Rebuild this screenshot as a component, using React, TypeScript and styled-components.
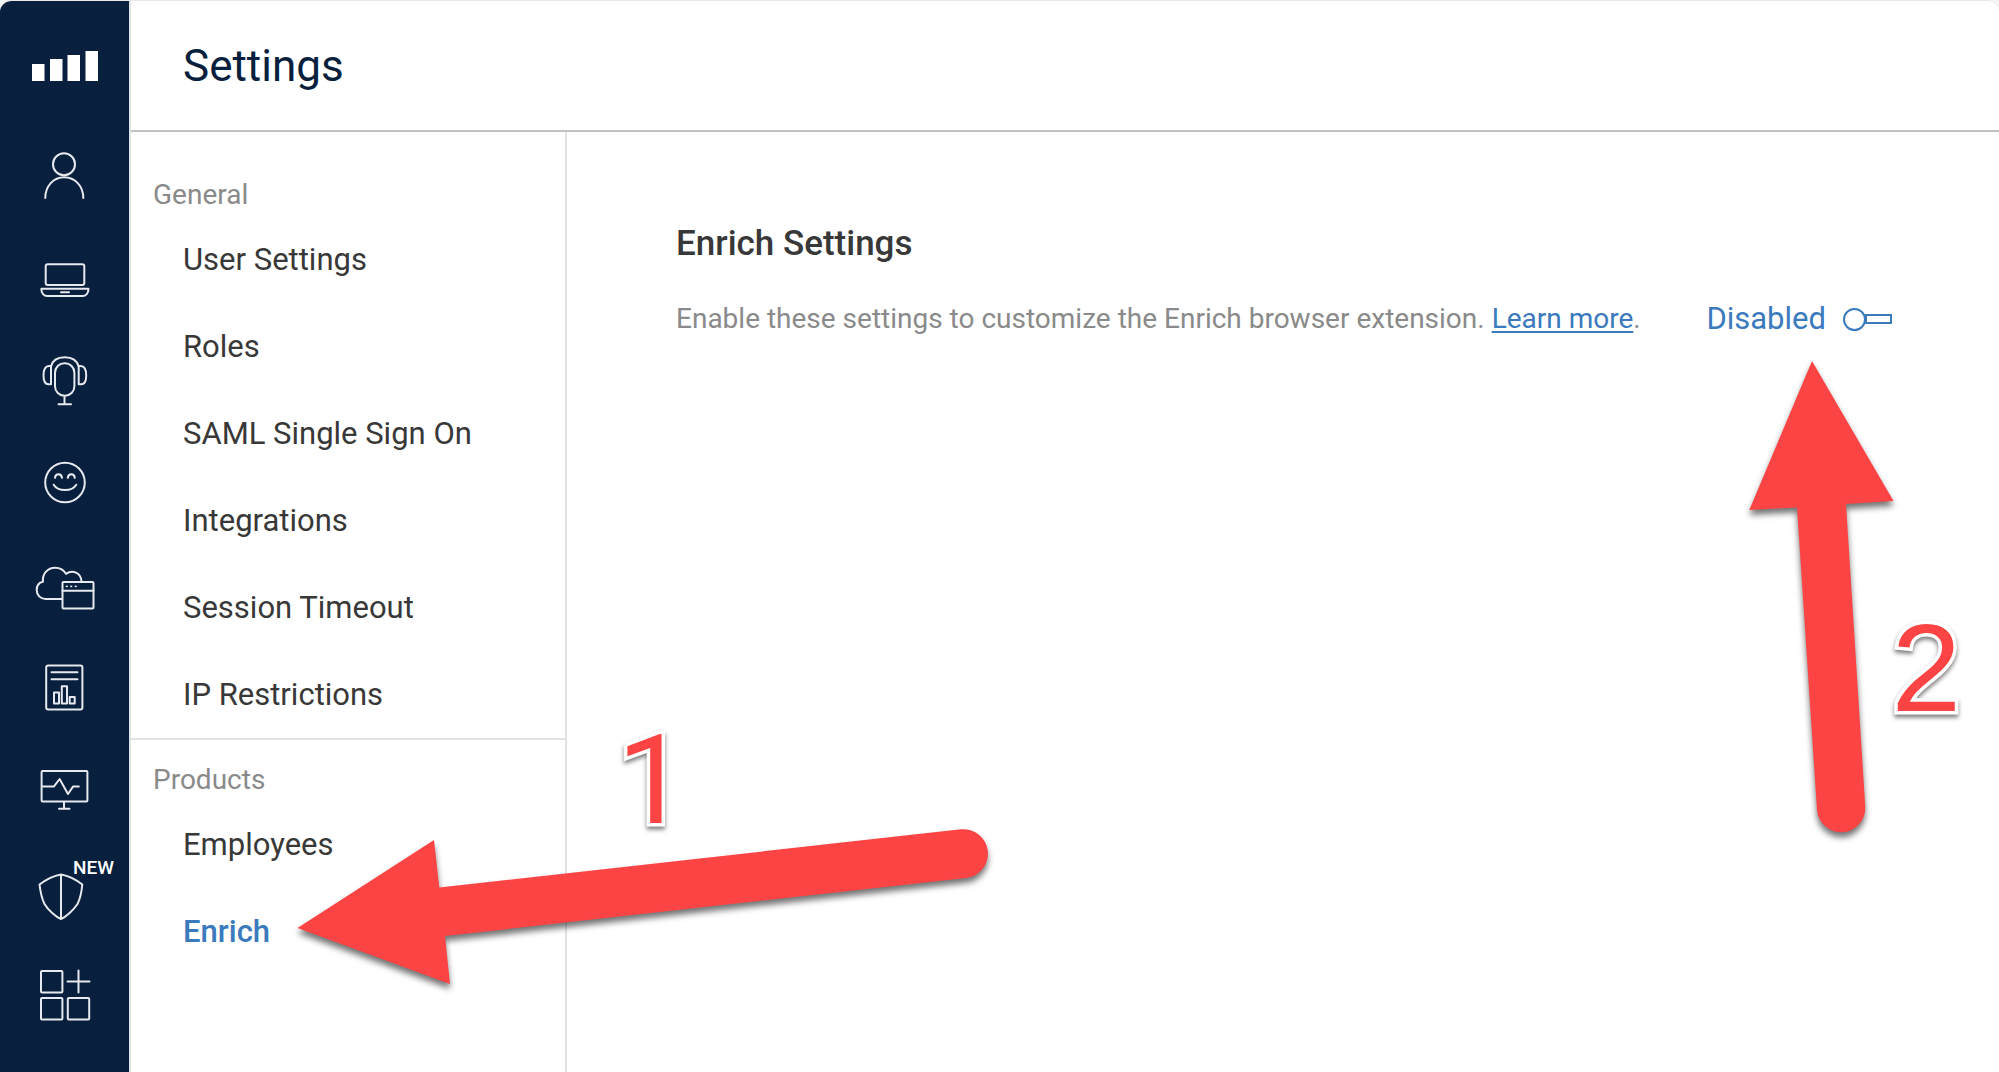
import React from "react";
import styled, { createGlobalStyle } from "styled-components";

const color = {
  navy: "#081f3d",
  ink: "#383838",
  muted: "#8a8a8a",
  link: "#3a7abd",
  line: "#e2e2e2",
  headerLine: "#c2c2c2",
  marker: "#fd4444",
};

const GlobalStyle = createGlobalStyle`
  *, *::before, *::after { box-sizing: border-box; }
  body {
    margin: 0;
    background: #f4f4f4;
    color: ${color.ink};
    font-family: Roboto, "Liberation Sans", sans-serif;
  }
  h1, h2, h3, p, ul { margin: 0; padding: 0; }
`;

const Shell = styled.div`
  position: relative;
  display: grid;
  grid-template-columns: 131px 1fr;
  min-height: 100vh;
  overflow: hidden;
  border-top: 1px solid #e8e8e8;
  border-radius: 12px 12px 0 0;
  background: #ffffff;
`;

const Rail = styled.nav`
  display: flex;
  flex-direction: column;
  background: ${color.navy};
  border-right: 2px solid #dfe3e8;
`;

const RailLink = styled.a<{ $tall?: boolean }>`
  position: relative;
  display: block;
  height: ${(p) => (p.$tall ? 124 : 102)}px;
  color: #e6e9ee;

  svg {
    display: block;
    width: 129px;
    height: 100%;
    fill: none;
    stroke: currentColor;
    stroke-width: 2;
    stroke-linecap: round;
    stroke-linejoin: round;
  }
`;

const Badge = styled.span`
  position: absolute;
  top: 19px;
  left: 73px;
  color: #ffffff;
  font-size: 19px;
  font-weight: 500;
  line-height: 20px;
`;

const Page = styled.div`
  display: flex;
  flex-direction: column;
  min-width: 0;
`;

const Header = styled.header`
  padding: 37px 52px 36px;
  border-bottom: 2px solid ${color.headerLine};
`;

const Title = styled.h1`
  color: ${color.navy};
  font-size: 44px;
  font-weight: 400;
  line-height: 56px;
`;

const Body = styled.div`
  flex: 1;
  display: grid;
  grid-template-columns: 436px 1fr;
`;

const Menu = styled.nav`
  border-right: 2px solid ${color.line};
`;

const Group = styled.section`
  padding-top: 42px;

  & + & {
    padding-top: 19px;
    border-top: 2px solid ${color.line};
  }
`;

const GroupLabel = styled.h3`
  padding: 0 22px;
  color: ${color.muted};
  font-size: 28px;
  font-weight: 400;
  line-height: 42px;
`;

const MenuList = styled.ul`
  list-style: none;
`;

const MenuLink = styled.a<{ $active?: boolean }>`
  display: block;
  padding: 0 52px;
  color: ${(p) => (p.$active ? color.link : color.ink)};
  font-size: 31px;
  font-weight: ${(p) => (p.$active ? 500 : 400)};
  line-height: 87px;
  text-decoration: none;
`;

const Content = styled.main`
  padding: 88px 107px 88px 109px;
`;

const SectionTitle = styled.h2`
  font-size: 35px;
  font-weight: 500;
  line-height: 48px;
`;

const SettingRow = styled.div`
  display: flex;
  align-items: center;
  justify-content: space-between;
  gap: 24px;
  margin-top: 30px;
`;

const Description = styled.p`
  color: ${color.muted};
  font-size: 28px;
  line-height: 42px;
`;

const TextLink = styled.a`
  color: ${color.link};
  text-decoration: underline;
  text-decoration-thickness: 2px;
  text-underline-offset: 3px;
`;

const ToggleLabel = styled.label`
  display: flex;
  align-items: center;
  gap: 17px;
  color: ${color.link};
  font-size: 31px;
  line-height: 42px;
`;

const Switch = styled.input`
  appearance: none;
  display: flex;
  align-items: center;
  margin: 0;

  &::before {
    content: "";
    width: 23px;
    height: 23px;
    border: 2px solid ${color.link};
    border-radius: 50%;
  }

  &::after {
    content: "";
    width: 27px;
    height: 10px;
    border: 2px solid ${color.link};
    margin-left: -1px;
  }
`;

const ArrowToMenu = styled.svg`
  position: absolute;
  top: 819px;
  left: 280px;
  width: 720px;
  height: 180px;
  pointer-events: none;
  filter: drop-shadow(0 5px 3px rgba(0, 0, 0, 0.55));
`;

const ArrowToToggle = styled.svg`
  position: absolute;
  top: 349px;
  right: 89px;
  width: 180px;
  height: 500px;
  pointer-events: none;
  filter: drop-shadow(0 5px 3px rgba(0, 0, 0, 0.55));
`;

const Step = styled.span`
  position: absolute;
  color: ${color.marker};
  font-size: 125px;
  line-height: 140px;
  -webkit-text-stroke: 7px #ffffff;
  paint-order: stroke fill;
  stroke-linejoin: round;
  filter: drop-shadow(0 3px 2px rgba(0, 0, 0, 0.5));
  pointer-events: none;
`;

const StepOne = styled(Step)`
  top: 710px;
  left: 617px;
`;

const StepTwo = styled(Step)`
  top: 597px;
  right: 38px;
  font-family: "Liberation Sans", Arial, sans-serif;
`;

type RailIcon = { label: string; badge?: string; art: React.ReactNode };

/* Each drawing sits in a 129 x 102 cell. */
const railIcons: RailIcon[] = [
  {
    label: "People",
    art: (
      <>
        <circle cx="64" cy="39.2" r="11" />
        <path d="M45.3 73C45.3 61 53.5 52.3 64.2 52.3S83.3 61 83.3 73" />
      </>
    ),
  },
  {
    label: "Devices",
    art: (
      <>
        <rect x="45.7" y="37.3" width="38.6" height="20.6" rx="2" />
        <path d="M41.4 61.7H88.4V62.5C88.4 66 86 69 82.5 69H47.3C43.8 69 41.4 66 41.4 62.5Z" />
        <path d="M61 65.3H69" />
      </>
    ),
  },
  {
    label: "Voice",
    art: (
      <>
        <rect x="55" y="34.2" width="19.4" height="32.6" rx="9.5" />
        <path d="M51 37.5C52.5 31 57.5 28.2 64.7 28.2S77 31 78.7 37.5" />
        <path d="M51 37H49C45 37 43.5 40.5 43.5 46.5S45 55.3 48.5 55.3H51Z" />
        <path d="M78.7 37H80.7C84.7 37 86.2 40.5 86.2 46.5S84.7 55.3 81.2 55.3H78.7Z" />
        <path d="M64.5 67V75M58.5 75.3H71" />
      </>
    ),
  },
  {
    label: "Experience",
    art: (
      <>
        <circle cx="65" cy="51.5" r="19.8" />
        <path d="M55 46.8C55.4 42 61.4 42 62 46.8M67.8 46.8C68.4 42 74.4 42 74.8 46.8" />
        <path d="M53.7 53.7C58 60.8 72 60.8 76.3 53.7" />
      </>
    ),
  },
  {
    label: "Cloud applications",
    art: (
      <>
        <path d="M62 66H45.5C40.5 66 36.7 62 36.7 57C36.7 53 39 49.5 43 48.7C42 40.5 48 34.7 55 34.7C60 34.7 64 37 66 40.8C72.5 36.5 81 39.5 81.5 48.5" />
        <rect x="62.5" y="48.9" width="31" height="26.5" rx="1" />
        <path d="M62.5 57.8H93.5" />
        <path d="M66.5 53.3H67M71 53.3H71.5M75.5 53.3H76" strokeWidth="1.8" />
      </>
    ),
  },
  {
    label: "Reports",
    art: (
      <>
        <rect x="46.2" y="30.4" width="36.2" height="44.2" rx="2" />
        <path d="M51.5 37.2H77.5M51.5 44.3H77.5" />
        <path d="M54 57.6H59V68.5H54ZM61.8 51.2H67V68.5H61.8ZM69.7 62H74.7V68.5H69.7Z" />
      </>
    ),
  },
  {
    label: "Monitoring",
    art: (
      <>
        <rect x="41.6" y="34" width="45.8" height="30.6" rx="1" />
        <path d="M42 49.6H53.8L59.6 42L68 57L73 49.6H78.8" />
        <path d="M64 65V71.5M59 71.8H69.5" />
      </>
    ),
  },
  {
    label: "Security",
    badge: "NEW",
    art: (
      <>
        <path d="M39.5 45.5C44 42 52 37 61 35.4C70 37 78 42 82.3 45.5C81.5 54 80.5 59 77.5 65C73.5 71 66 78 61 80C56 78 48 71 44.5 65C41.5 59 40.5 54 39.5 45.5Z" />
        <path d="M61 36V79" />
      </>
    ),
  },
  {
    label: "Add applications",
    art: (
      <>
        <rect x="41" y="30" width="21.4" height="21.4" rx="1" />
        <rect x="41" y="57" width="21.4" height="21.4" rx="1" />
        <rect x="67.8" y="57" width="21.4" height="21.4" rx="1" />
        <path d="M78.5 29.5V51.5M67.5 40.5H89.5" />
      </>
    ),
  },
];

const menu = [
  {
    title: "General",
    items: [
      "User Settings",
      "Roles",
      "SAML Single Sign On",
      "Integrations",
      "Session Timeout",
      "IP Restrictions",
    ],
  },
  { title: "Products", items: ["Employees", "Enrich"] },
];

export default function App() {
  return (
    <>
      <GlobalStyle />
      <Shell>
        <Rail aria-label="Products">
          <RailLink href="#home" aria-label="Home" $tall>
            <svg viewBox="0 0 129 124" aria-hidden="true">
              <g fill="#ffffff" stroke="none">
                <rect x="32" y="63" width="12.5" height="17" />
                <rect x="50" y="58" width="12.5" height="22" />
                <rect x="67.5" y="54" width="12.5" height="26" />
                <rect x="85.5" y="50" width="12.5" height="30" />
              </g>
            </svg>
          </RailLink>
          {railIcons.map((icon) => (
            <RailLink key={icon.label} href="#" aria-label={icon.label}>
              <svg viewBox="0 0 129 102" aria-hidden="true">
                {icon.art}
              </svg>
              {icon.badge && <Badge>{icon.badge}</Badge>}
            </RailLink>
          ))}
        </Rail>

        <Page>
          <Header>
            <Title>Settings</Title>
          </Header>
          <Body>
            <Menu aria-label="Settings">
              {menu.map((group) => (
                <Group key={group.title}>
                  <GroupLabel>{group.title}</GroupLabel>
                  <MenuList>
                    {group.items.map((item) => (
                      <li key={item}>
                        <MenuLink
                          href="#"
                          $active={item === "Enrich"}
                          aria-current={item === "Enrich" ? "page" : undefined}
                        >
                          {item}
                        </MenuLink>
                      </li>
                    ))}
                  </MenuList>
                </Group>
              ))}
            </Menu>
            <Content>
              <SectionTitle>Enrich Settings</SectionTitle>
              <SettingRow>
                <Description>
                  Enable these settings to customize the Enrich browser extension.{" "}
                  <TextLink href="#">Learn more</TextLink>.
                </Description>
                <ToggleLabel htmlFor="enrich-enabled">
                  Disabled
                  <Switch id="enrich-enabled" type="checkbox" role="switch" />
                </ToggleLabel>
              </SettingRow>
            </Content>
          </Body>
        </Page>

        <ArrowToMenu viewBox="280 820 720 180" aria-hidden="true">
          <path
            d="M297.5 928L434 840L439.3 887.5L961 829.3A24.4 24.4 0 0 1 966 878L445 936L450 984Z"
            fill={color.marker}
          />
        </ArrowToMenu>
        <ArrowToToggle viewBox="1730 350 180 500" aria-hidden="true">
          <path
            d="M1812 361L1893.5 501L1846 504L1865.3 807A24.2 24.2 0 0 1 1817 810L1797 507.5L1749.3 510Z"
            fill={color.marker}
          />
        </ArrowToToggle>
        <StepOne>1</StepOne>
        <StepTwo>2</StepTwo>
      </Shell>
    </>
  );
}
